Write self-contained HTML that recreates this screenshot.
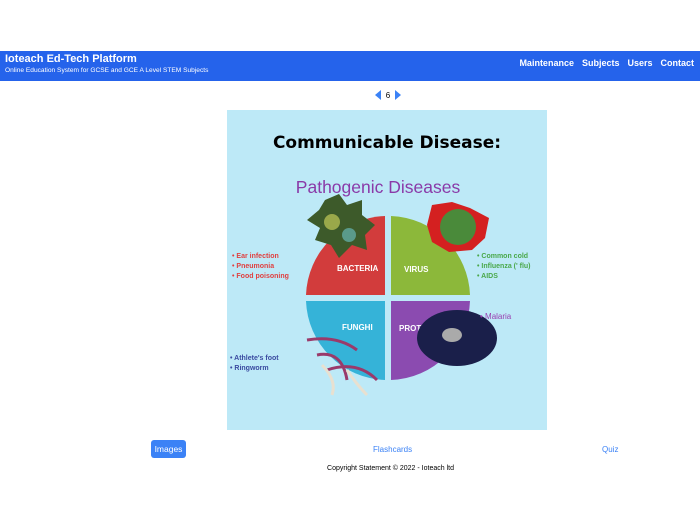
<!DOCTYPE html>
<html><head><style>
body{margin:0;width:700px;height:525px;background:#fff;font-family:"Liberation Sans",sans-serif;position:relative;overflow:hidden}
.nav{position:absolute;top:51px;left:0;width:700px;height:30px;background:#2563eb;color:#fff}
.t1{position:absolute;left:5px;top:2px;font-size:11px;font-weight:bold}
.t2{position:absolute;left:5px;top:16px;font-size:6.6px}
.links{position:absolute;right:6px;top:7px;font-size:9px;font-weight:bold}
.links span{margin-left:8px}
.abs{position:absolute}
</style></head><body>
<div class="nav"><div class="t1">Ioteach Ed-Tech Platform</div><div class="t2">Online Education System for GCSE and GCE A Level STEM Subjects</div>
<div class="links"><span>Maintenance</span><span>Subjects</span><span>Users</span><span>Contact</span></div></div>
<svg class="abs" style="left:374px;top:89px" width="28" height="12"><polygon points="7,1 7,11 1,6" fill="#3b82f6"/><polygon points="21,1 21,11 27,6" fill="#3b82f6"/><text x="14" y="9" font-size="8" text-anchor="middle" font-family="Liberation Sans">6</text></svg>
<svg class="abs" style="left:227px;top:110px" width="320" height="320" viewBox="0 0 320 320">
<rect width="320" height="320" fill="#bde9f7"/>
<text x="160" y="38" font-size="17" font-weight="bold" text-anchor="middle" font-family="DejaVu Sans">Communicable Disease:</text>
<text x="151" y="83" font-size="17.5" fill="#8a3aa8" text-anchor="middle" font-family="Liberation Sans">Pathogenic Diseases</text>
<g transform="translate(161,188)">
<path d="M-3,-3 L-3,-82 A82,82 0 0 0 -82,-3Z" fill="#d23c3c"/>
<path d="M3,-3 L3,-82 A82,82 0 0 1 82,-3Z" fill="#8cb83a"/>
<path d="M-3,3 L-82,3 A82,82 0 0 0 -3,82Z" fill="#35b3d8"/>
<path d="M3,3 L82,3 A82,82 0 0 1 3,82Z" fill="#8b4bb0"/>
</g>
<g font-size="8" font-weight="bold" fill="#fff" font-family="Liberation Sans"><text x="110" y="161">BACTERIA</text><text x="177" y="162">VIRUS</text><text x="115" y="220">FUNGHI</text><text x="172" y="221">PROTISTS</text></g>
<polygon points="98,90 112,84 120,95 135,90 135,105 148,115 138,125 140,140 125,135 112,148 104,135 88,130 93,118 80,110 92,100" fill="#3d5a2a"/>
<circle cx="105" cy="112" r="8" fill="#9aa84a"/><circle cx="122" cy="125" r="7" fill="#5a9a8a"/>
<polygon points="205,95 225,92 243,98 262,108 258,128 245,140 222,142 205,132 200,115" fill="#d42020"/>
<circle cx="231" cy="117" r="18" fill="#4a8a3a"/>
<ellipse cx="230" cy="228" rx="40" ry="28" fill="#1a1f4a"/>
<ellipse cx="225" cy="225" rx="10" ry="7" fill="#aaa"/>
<path d="M80,230 Q110,225 130,240 M90,245 Q115,240 120,270 M100,260 Q130,250 150,270" stroke="#9a3a6a" stroke-width="3" fill="none"/>
<path d="M95,255 Q110,270 105,285 M120,260 Q130,275 140,285" stroke="#e8e0d0" stroke-width="3" fill="none"/>
<g font-size="7" font-weight="bold" font-family="Liberation Sans">
<g fill="#e04040"><text x="5" y="148">•  Ear infection</text><text x="5" y="158">•  Pneumonia</text><text x="5" y="168">•  Food poisoning</text></g>
<g fill="#4aa84a"><text x="250" y="148">•  Common cold</text><text x="250" y="158">•  Influenza (' flu)</text><text x="250" y="168">•  AIDS</text></g>
<text x="253" y="209" fill="#9a40b0" font-weight="normal" font-size="8">•   Malaria</text>
<g fill="#3a4aa0"><text x="3" y="250">•  Athlete's foot</text><text x="3" y="260">•  Ringworm</text></g>
</g>
</svg>
<div class="abs" style="left:151px;top:440px;width:35px;height:18px;background:#3b82f6;border-radius:3px;color:#fff;font-size:8.5px;text-align:center;line-height:18px">Images</div>
<div class="abs" style="left:373px;top:445px;font-size:8px;color:#3b82f6">Flashcards</div>
<div class="abs" style="left:602px;top:445px;font-size:8px;color:#3b82f6">Quiz</div>
<div class="abs" style="left:0;width:781px;top:465px;font-size:7px;text-align:center">Copyright Statement © 2022 - Ioteach ltd</div>
</body></html>
